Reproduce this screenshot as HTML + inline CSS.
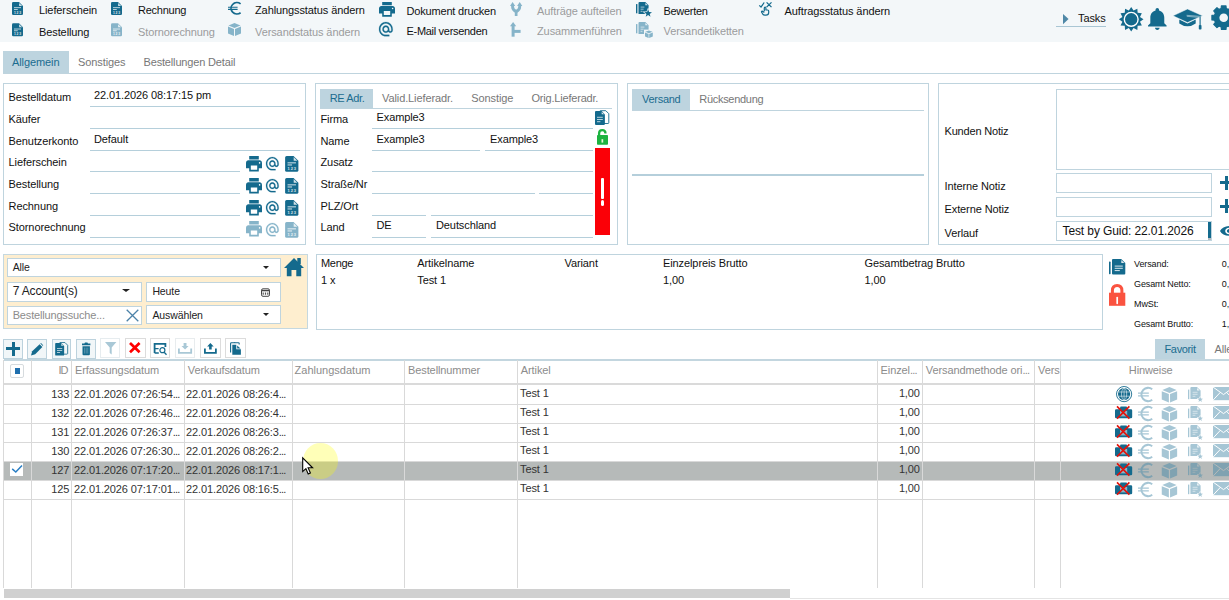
<!DOCTYPE html>
<html lang="de">
<head>
<meta charset="utf-8">
<title>Bestellungen</title>
<style>
*{box-sizing:border-box;margin:0;padding:0}
html,body{width:1229px;height:600px;overflow:hidden;background:#fff}
body{position:relative;font-family:"Liberation Sans",sans-serif;font-size:11px;color:#111;line-height:1}
.a{position:absolute}
.t{position:absolute;white-space:nowrap;line-height:14px;height:14px;letter-spacing:-0.1px}
.g{color:#9b9c9d}
.box{position:absolute;border:1px solid #bfd4de;background:#fff}
.ul{position:absolute;height:1px;background:#b5cfdb}
.tabon{position:absolute;background:#bdd4df}
.tb{color:#1b6c8f}
.tg{color:#777}
.inp{position:absolute;border:1px solid #bfd4de;background:#fff}
.vl{position:absolute;width:1px;background:#d9d9d9;top:360px;height:228px}
.hl{position:absolute;height:1px;background:#d9d9d9;left:4px;width:1225px}
.el{letter-spacing:-0.8px}
svg{position:absolute;overflow:visible}
</style>
</head>
<body>
<!-- top toolbar -->
<div class="a" id="topbar" style="left:0;top:0;width:1229px;height:42px;background:#f3f7f9"></div>

<!-- toolbar text -->
<div class="t" style="left:39px;top:3px;">Lieferschein</div>
<div class="t" style="left:39px;top:24.5px;">Bestellung</div>
<div class="t" style="left:138px;top:3px;letter-spacing:-0.25px;">Rechnung</div>
<div class="t g" style="left:138px;top:24.5px;">Stornorechnung</div>
<div class="t" style="left:255px;top:3px;">Zahlungsstatus ändern</div>
<div class="t g" style="left:255px;top:24.5px;">Versandstatus ändern</div>
<div class="t" style="left:406.5px;top:3.8px;letter-spacing:-0.18px;">Dokument drucken</div>
<div class="t" style="left:406.5px;top:23.6px;letter-spacing:-0.3px;">E-Mail versenden</div>
<div class="t g" style="left:537px;top:3.8px;">Aufträge aufteilen</div>
<div class="t g" style="left:537px;top:23.6px;">Zusammenführen</div>
<div class="t" style="left:663.5px;top:3.8px;letter-spacing:-0.3px;">Bewerten</div>
<div class="t g" style="left:663.5px;top:23.6px;">Versandetiketten</div>
<div class="t" style="left:784.5px;top:3.8px;">Auftragsstatus ändern</div>
<div class="t" style="left:1078px;top:10.5px;">Tasks</div>
<div class="ul" style="left:1056px;top:26px;width:50px;background:#a9c6d4"></div>
<!-- main tabs text -->
<div class="tabon" style="left:3px;top:51px;width:66px;height:22px"></div>
<div class="t tb" style="left:12px;top:54.7px;">Allgemein</div>
<div class="t tg" style="left:78px;top:54.7px;">Sonstiges</div>
<div class="t tg" style="left:143.5px;top:54.7px;letter-spacing:-0.16px;">Bestellungen Detail</div>
<!-- main tabs -->
<div class="ul" style="left:3px;top:73px;width:1226px;background:#bfd4de"></div>

<!-- panel 1 -->
<div class="box" id="p1" style="left:3px;top:83px;width:303px;height:162px"></div>
<div class="t" style="left:8.6px;top:89.9px;">Bestelldatum</div>
<div class="ul" style="left:90px;top:106px;width:210px;"></div>
<div class="t" style="left:8.6px;top:111.5px;">Käufer</div>
<div class="ul" style="left:90px;top:128px;width:210px;"></div>
<div class="t" style="left:8.6px;top:134.2px;">Benutzerkonto</div>
<div class="ul" style="left:90px;top:150px;width:210px;"></div>
<div class="t" style="left:8.6px;top:154.6px;">Lieferschein</div>
<div class="ul" style="left:90px;top:171px;width:150px;"></div>
<div class="t" style="left:8.6px;top:177.1px;">Bestellung</div>
<div class="ul" style="left:90px;top:193px;width:150px;"></div>
<div class="t" style="left:8.6px;top:199.0px;">Rechnung</div>
<div class="ul" style="left:90px;top:215px;width:150px;"></div>
<div class="t" style="left:8.6px;top:219.7px;">Stornorechnung</div>
<div class="ul" style="left:90px;top:237px;width:150px;"></div>
<div class="t" style="left:94px;top:88.1px;">22.01.2026 08:17:15 pm</div>
<div class="t" style="left:94px;top:131.9px;">Default</div>
<!-- panel 2 -->
<div class="box" id="p2" style="left:315px;top:83px;width:303px;height:162px"></div>
<div class="tabon" style="left:320px;top:89px;width:53px;height:19px"></div>
<div class="ul" style="left:320px;top:108px;width:292px;background:#bfd4de"></div>
<div class="t tb" style="left:329.8px;top:90.5px;letter-spacing:-0.4px;">RE Adr.</div>
<div class="t tg" style="left:382px;top:90.5px;">Valid.Lieferadr.</div>
<div class="t tg" style="left:471.3px;top:90.5px;">Sonstige</div>
<div class="t tg" style="left:531.5px;top:90.5px;letter-spacing:-0.2px;">Orig.Lieferadr.</div>
<div class="t" style="left:320.5px;top:112.3px;">Firma</div>
<div class="t" style="left:320.5px;top:134.2px;">Name</div>
<div class="t" style="left:320.5px;top:154.6px;">Zusatz</div>
<div class="t" style="left:320.5px;top:177.1px;">Straße/Nr</div>
<div class="t" style="left:320.5px;top:199.2px;">PLZ/Ort</div>
<div class="t" style="left:320.5px;top:219.7px;">Land</div>
<div class="ul" style="left:372px;top:128px;width:221px;"></div>
<div class="ul" style="left:372px;top:150px;width:108px;"></div>
<div class="ul" style="left:485px;top:150px;width:108px;"></div>
<div class="ul" style="left:372px;top:171px;width:221px;"></div>
<div class="ul" style="left:372px;top:193px;width:163px;"></div>
<div class="ul" style="left:539px;top:193px;width:54px;"></div>
<div class="ul" style="left:372px;top:215px;width:54px;"></div>
<div class="ul" style="left:431px;top:215px;width:162px;"></div>
<div class="ul" style="left:372px;top:237px;width:54px;"></div>
<div class="ul" style="left:431px;top:237px;width:162px;"></div>
<div class="t" style="left:376.5px;top:110.0px;">Example3</div>
<div class="t" style="left:376.5px;top:131.7px;">Example3</div>
<div class="t" style="left:490px;top:131.7px;">Example3</div>
<div class="t" style="left:376.5px;top:217.9px;">DE</div>
<div class="t" style="left:436px;top:217.9px;">Deutschland</div>
<div class="a" style="left:595px;top:148px;width:15px;height:87px;background:#fb0007"></div>
<!-- panel 3 -->
<div class="box" id="p3" style="left:627px;top:83px;width:302px;height:162px"></div>
<div class="tabon" style="left:632px;top:89px;width:58px;height:21px"></div>
<div class="ul" style="left:632px;top:110px;width:292px;background:#bfd4de"></div>
<div class="ul" style="left:632px;top:174px;width:292px;height:2px;background:#b5cfdb"></div>
<div class="t tb" style="left:642px;top:91.8px;letter-spacing:-0.28px;">Versand</div>
<div class="t tg" style="left:699.3px;top:91.8px;letter-spacing:-0.3px;">Rücksendung</div>
<!-- panel 4 -->
<div class="box" id="p4" style="left:938px;top:83px;width:300px;height:162px"></div>

<div class="inp" style="left:1056px;top:89px;width:180px;height:81px"></div>
<div class="inp" style="left:1056px;top:173px;width:156px;height:20px"></div>
<div class="inp" style="left:1056px;top:197px;width:156px;height:20px"></div>
<div class="inp" style="left:1056px;top:221px;width:156px;height:20px"></div>
<div class="a" style="left:1208px;top:222px;width:3px;height:16px;background:#146a8d"></div><div class="a" style="left:1208px;top:238px;width:3px;height:2px;background:#b4bcc0"></div>
<div class="t" style="left:944.5px;top:124.0px;letter-spacing:-0.18px;">Kunden Notiz</div>
<div class="t" style="left:944.5px;top:178.8px;">Interne Notiz</div>
<div class="t" style="left:944.5px;top:201.9px;">Externe Notiz</div>
<div class="t" style="left:944.5px;top:226.2px;">Verlauf</div>
<div class="t" style="left:1062.5px;top:223.7px;font-size:12px;letter-spacing:-0.1px;">Test by Guid: 22.01.2026</div>
<!-- filter panel -->
<div class="a" id="filt" style="left:3px;top:254px;width:305px;height:75px;background:#feeecf;border:1px solid #c5d8e0"></div>
<div class="inp" style="left:7px;top:258px;width:274px;height:19px"></div>
<div class="inp" style="left:7px;top:282px;width:135px;height:20px"></div>
<div class="inp" style="left:146px;top:282px;width:135px;height:20px"></div>
<div class="inp" style="left:7px;top:306px;width:135px;height:19px"></div>
<div class="inp" style="left:146px;top:305px;width:135px;height:19px"></div>
<div class="t" style="left:12.7px;top:260.2px;font-size:10.5px;color:#222;">Alle</div>
<div class="t" style="left:12.7px;top:284.4px;font-size:12px;color:#222;letter-spacing:-0.15px;">7 Account(s)</div>
<div class="t" style="left:152.4px;top:284.1px;font-size:10.5px;color:#222;">Heute</div>
<div class="t" style="left:12.7px;top:308.2px;color:#8c8c8c;letter-spacing:-0.17px;">Bestellungssuche...</div>
<div class="t" style="left:152.4px;top:307.8px;font-size:10.5px;color:#222;">Auswählen</div>
<div class="a" style="left:263.3px;top:266px;width:0;height:0;border-left:3.0px solid transparent;border-right:3.0px solid transparent;border-top:3px solid #222"></div>
<div class="a" style="left:121.5px;top:289.3px;width:0;height:0;border-left:4.0px solid transparent;border-right:4.0px solid transparent;border-top:3.5px solid #222"></div>
<div class="a" style="left:263.3px;top:313px;width:0;height:0;border-left:3.0px solid transparent;border-right:3.0px solid transparent;border-top:3px solid #222"></div>
<svg style="left:126px;top:309px" width="13" height="13" viewBox="0 0 13 13"><path d="M0.7 0.7L12.3 12.3M12.3 0.7L0.7 12.3" stroke="#4c82a8" stroke-width="1.3" fill="none"/></svg>
<!-- article list -->
<div class="box" id="art" style="left:316px;top:254px;width:787px;height:76px"></div>

<div class="t" style="left:321px;top:256px;letter-spacing:-0.3px;">Menge</div>
<div class="t" style="left:417.3px;top:256px;">Artikelname</div>
<div class="t" style="left:564.5px;top:256px;">Variant</div>
<div class="t" style="left:663px;top:256px;">Einzelpreis Brutto</div>
<div class="t" style="left:864.5px;top:256px;">Gesamtbetrag Brutto</div>
<div class="t" style="left:321px;top:272.7px;">1 x</div>
<div class="t" style="left:417.3px;top:272.7px;">Test 1</div>
<div class="t" style="left:663px;top:272.7px;">1,00</div>
<div class="t" style="left:864.5px;top:272.7px;">1,00</div>
<div class="t" style="left:1134px;top:256.6px;font-size:9px;">Versand:</div>
<div class="t" style="left:1221.8px;top:256.6px;font-size:9px;">0,</div>
<div class="t" style="left:1134px;top:276.9px;font-size:9px;">Gesamt Netto:</div>
<div class="t" style="left:1221.8px;top:276.9px;font-size:9px;">0,</div>
<div class="t" style="left:1134px;top:296.9px;font-size:9px;">MwSt:</div>
<div class="t" style="left:1221.8px;top:296.9px;font-size:9px;">0,</div>
<div class="t" style="left:1134px;top:316.9px;font-size:9px;">Gesamt Brutto:</div>
<div class="t" style="left:1221.8px;top:316.9px;font-size:9px;">1,</div>
<div class="tabon" style="left:1155px;top:339px;width:50px;height:21px"></div>
<div class="t tb" style="left:1164.5px;top:341.5px;letter-spacing:-0.35px;">Favorit</div>
<div class="t tg" style="left:1214.4px;top:341.5px;">Alle</div>
<!-- grid -->
<div class="a" id="grid" style="left:4px;top:359px;width:1225px;height:2px;background:#c3d6df"></div>
<div class="a" id="selrow" style="left:4px;top:462px;width:1225px;height:19px;background:#b6bab9"></div>

<div class="vl" style="left:3px"></div>
<div class="vl" style="left:31px"></div>
<div class="vl" style="left:71px"></div>
<div class="vl" style="left:184px"></div>
<div class="vl" style="left:292px"></div>
<div class="vl" style="left:404px"></div>
<div class="vl" style="left:517px"></div>
<div class="vl" style="left:877px"></div>
<div class="vl" style="left:922px"></div>
<div class="vl" style="left:1034px"></div>
<div class="vl" style="left:1060px"></div>
<div class="hl" style="top:383px;height:2px;background:#dadada"></div>
<div class="hl" style="top:404px"></div>
<div class="hl" style="top:423px"></div>
<div class="hl" style="top:442px"></div>
<div class="hl" style="top:461px"></div>
<div class="hl" style="top:480px"></div>
<div class="hl" style="top:499px"></div>
<div class="a" style="left:10px;top:364px;width:14px;height:14px;border:1px solid #d6dbde;border-radius:2px;background:#fff"></div>
<div class="a" style="left:15px;top:368px;width:5px;height:6px;background:#1f6fae"></div>
<div class="t" style="left:58.6px;top:362.6px;color:#8c8c8c;letter-spacing:-1.2px;">ID</div>
<div class="t" style="left:75px;top:362.6px;color:#8c8c8c;">Erfassungsdatum</div>
<div class="t" style="left:187.8px;top:362.6px;color:#8c8c8c;">Verkaufsdatum</div>
<div class="t" style="left:294.6px;top:362.6px;color:#8c8c8c;letter-spacing:0px;">Zahlungsdatum</div>
<div class="t" style="left:408px;top:362.6px;color:#8c8c8c;">Bestellnummer</div>
<div class="t" style="left:520.8px;top:362.6px;color:#8c8c8c;">Artikel</div>
<div class="t" style="left:880.6px;top:362.6px;color:#8c8c8c;">Einzel<span class="el">...</span></div>
<div class="t" style="left:925.8px;top:362.6px;color:#8c8c8c;">Versandmethode ori<span class="el">...</span></div>
<div class="t" style="left:1038px;top:362.6px;color:#8c8c8c;">Vers</div>
<div class="t" style="left:1128.8px;top:362.6px;color:#8c8c8c;">Hinweise</div>
<div class="t" style="right:1159.7px;top:387.4px;color:#333;letter-spacing:-0.12px;">133</div>
<div class="t" style="left:74px;top:387.4px;color:#333;letter-spacing:-0.12px;">22.01.2026 07:26:54<span class="el">...</span></div>
<div class="t" style="left:186.1px;top:387.4px;color:#333;letter-spacing:-0.12px;">22.01.2026 08:26:4<span class="el">...</span></div>
<div class="t" style="left:520px;top:385.9px;color:#333;letter-spacing:-0.12px;">Test 1</div>
<div class="t" style="right:309.20000000000005px;top:386.4px;color:#333;letter-spacing:-0.12px;">1,00</div>
<div class="t" style="right:1159.7px;top:406.4px;color:#333;letter-spacing:-0.12px;">132</div>
<div class="t" style="left:74px;top:406.4px;color:#333;letter-spacing:-0.12px;">22.01.2026 07:26:46<span class="el">...</span></div>
<div class="t" style="left:186.1px;top:406.4px;color:#333;letter-spacing:-0.12px;">22.01.2026 08:26:4<span class="el">...</span></div>
<div class="t" style="left:520px;top:404.9px;color:#333;letter-spacing:-0.12px;">Test 1</div>
<div class="t" style="right:309.20000000000005px;top:405.4px;color:#333;letter-spacing:-0.12px;">1,00</div>
<div class="t" style="right:1159.7px;top:425.4px;color:#333;letter-spacing:-0.12px;">131</div>
<div class="t" style="left:74px;top:425.4px;color:#333;letter-spacing:-0.12px;">22.01.2026 07:26:37<span class="el">...</span></div>
<div class="t" style="left:186.1px;top:425.4px;color:#333;letter-spacing:-0.12px;">22.01.2026 08:26:3<span class="el">...</span></div>
<div class="t" style="left:520px;top:423.9px;color:#333;letter-spacing:-0.12px;">Test 1</div>
<div class="t" style="right:309.20000000000005px;top:424.4px;color:#333;letter-spacing:-0.12px;">1,00</div>
<div class="t" style="right:1159.7px;top:444.4px;color:#333;letter-spacing:-0.12px;">130</div>
<div class="t" style="left:74px;top:444.4px;color:#333;letter-spacing:-0.12px;">22.01.2026 07:26:30<span class="el">...</span></div>
<div class="t" style="left:186.1px;top:444.4px;color:#333;letter-spacing:-0.12px;">22.01.2026 08:26:2<span class="el">...</span></div>
<div class="t" style="left:520px;top:442.9px;color:#333;letter-spacing:-0.12px;">Test 1</div>
<div class="t" style="right:309.20000000000005px;top:443.4px;color:#333;letter-spacing:-0.12px;">1,00</div>
<div class="t" style="right:1159.7px;top:463.4px;color:#333;letter-spacing:-0.12px;">127</div>
<div class="t" style="left:74px;top:463.4px;color:#333;letter-spacing:-0.12px;">22.01.2026 07:17:20<span class="el">...</span></div>
<div class="t" style="left:186.1px;top:463.4px;color:#333;letter-spacing:-0.12px;">22.01.2026 08:17:1<span class="el">...</span></div>
<div class="t" style="left:520px;top:461.9px;color:#333;letter-spacing:-0.12px;">Test 1</div>
<div class="t" style="right:309.20000000000005px;top:462.4px;color:#333;letter-spacing:-0.12px;">1,00</div>
<div class="t" style="right:1159.7px;top:482.4px;color:#333;letter-spacing:-0.12px;">125</div>
<div class="t" style="left:74px;top:482.4px;color:#333;letter-spacing:-0.12px;">22.01.2026 07:17:01<span class="el">...</span></div>
<div class="t" style="left:186.1px;top:482.4px;color:#333;letter-spacing:-0.12px;">22.01.2026 08:16:5<span class="el">...</span></div>
<div class="t" style="left:520px;top:480.9px;color:#333;letter-spacing:-0.12px;">Test 1</div>
<div class="t" style="right:309.20000000000005px;top:481.4px;color:#333;letter-spacing:-0.12px;">1,00</div>
<div class="a" style="left:10.3px;top:462.8px;width:13.2px;height:13.2px;background:#fff"></div>
<svg style="left:10px;top:463px" width="14" height="14" viewBox="0 0 14 14"><path d="M2.2 5.9L5.8 9L12 2.5" stroke="#2a7fc4" stroke-width="1.5" fill="none"/></svg>
<!-- ICONS START -->
<svg style="left:12px;top:2px" width="11" height="13" viewBox="0 0 22 26"><path d="M2.5 0H14L22 8V23.5Q22 26 19.5 26H2.5Q0 26 0 23.5V2.5Q0 0 2.5 0Z" fill="#146a8d"/><path d="M14.2 1.8V7.8H20.2Z" fill="#fff" opacity=".8"/><rect x="4" y="10.5" width="14" height="1.7" fill="#fff" opacity=".8"/><rect x="4" y="14" width="7.5" height="1.7" fill="#fff" opacity=".8"/><text x="4" y="23" font-family="Liberation Sans, sans-serif" font-weight="bold" font-size="6.6" fill="#fff" opacity=".85" textLength="14">123</text></svg>
<svg style="left:12px;top:23px" width="11" height="13.7" viewBox="0 0 22 26"><path d="M2.5 0H14L22 8V23.5Q22 26 19.5 26H2.5Q0 26 0 23.5V2.5Q0 0 2.5 0Z" fill="#146a8d"/><path d="M14.2 1.8V7.8H20.2Z" fill="#fff" opacity=".8"/><rect x="4" y="10.5" width="14" height="1.7" fill="#fff" opacity=".8"/><rect x="4" y="14" width="7.5" height="1.7" fill="#fff" opacity=".8"/><text x="4" y="23" font-family="Liberation Sans, sans-serif" font-weight="bold" font-size="6.6" fill="#fff" opacity=".85" textLength="14">123</text></svg>
<svg style="left:111px;top:2px" width="11" height="13" viewBox="0 0 22 26"><path d="M2.5 0H14L22 8V23.5Q22 26 19.5 26H2.5Q0 26 0 23.5V2.5Q0 0 2.5 0Z" fill="#146a8d"/><path d="M14.2 1.8V7.8H20.2Z" fill="#fff" opacity=".8"/><rect x="4" y="10.5" width="14" height="1.7" fill="#fff" opacity=".8"/><rect x="4" y="14" width="7.5" height="1.7" fill="#fff" opacity=".8"/><text x="4" y="23" font-family="Liberation Sans, sans-serif" font-weight="bold" font-size="6.6" fill="#fff" opacity=".85" textLength="14">123</text></svg>
<svg style="left:111px;top:23px" width="11" height="13.7" viewBox="0 0 22 26"><path d="M2.5 0H14L22 8V23.5Q22 26 19.5 26H2.5Q0 26 0 23.5V2.5Q0 0 2.5 0Z" fill="#86b4c9"/><path d="M14.2 1.8V7.8H20.2Z" fill="#fff" opacity=".8"/><rect x="4" y="10.5" width="14" height="1.7" fill="#fff" opacity=".8"/><rect x="4" y="14" width="7.5" height="1.7" fill="#fff" opacity=".8"/><text x="4" y="23" font-family="Liberation Sans, sans-serif" font-weight="bold" font-size="6.6" fill="#fff" opacity=".85" textLength="14">123</text></svg>
<svg style="left:228px;top:2.1px" width="14" height="12.6" viewBox="0 0 14 12.6" preserveAspectRatio="none"><path d="M12.6 1.9A5.9 5.6 0 1 0 12.6 10.7" stroke="#146a8d" stroke-width="1.75" fill="none"/><path d="M0 5.2H9.6M0 7.4H9.6" stroke="#146a8d" stroke-width="1.05" fill="none"/></svg>
<svg style="left:228px;top:23px" width="13" height="13" viewBox="0 0 26 26"><path d="M13 0L25 5L13 10L1 5Z" fill="#86b4c9"/><path d="M0 7L12 12V26L0 21Z" fill="#86b4c9"/><path d="M26 7L14 12V26L26 21Z" fill="#86b4c9"/></svg>
<svg style="left:379px;top:2.1px" width="16" height="14.7" viewBox="2 3 20 18" preserveAspectRatio="none"><path d="M19 8H5c-1.66 0-3 1.34-3 3v6h4v4h12v-4h4v-6c0-1.66-1.34-3-3-3zm-3 11H8v-5h8v5zm3-7c-.55 0-1-.45-1-1s.45-1 1-1 1 .45 1 1-.45 1-1 1zm-1-9H6v4h12V3z" fill="#146a8d"/></svg>
<svg style="left:379.3px;top:22.4px" width="13.7" height="14.3" viewBox="2 2 20 20" preserveAspectRatio="none"><path d="M12 2C6.48 2 2 6.48 2 12s4.48 10 10 10h5v-2h-5c-4.34 0-8-3.66-8-8s3.66-8 8-8 8 3.66 8 8v1.43c0 .79-.71 1.57-1.5 1.57s-1.5-.78-1.5-1.57V12c0-2.76-2.24-5-5-5s-5 2.24-5 5 2.24 5 5 5c1.38 0 2.64-.56 3.54-1.47.65.89 1.77 1.47 2.96 1.47 1.97 0 3.5-1.6 3.5-3.57V12c0-5.52-4.48-10-10-10zm0 13c-1.66 0-3-1.34-3-3s1.34-3 3-3 3 1.34 3 3-1.34 3-3 3z" fill="#146a8d" stroke="#146a8d" stroke-width=".3"/></svg>
<svg style="left:510.1px;top:2.1px" width="12.3" height="14" viewBox="0 0 12.3 14"><path d="M0 4L2.6 0L5.2 4ZM7.1 4L9.7 0L12.3 4Z" fill="#86b4c9"/><path d="M2.6 3.4V5Q2.6 7.8 6.15 9.6M9.7 3.4V5Q9.7 7.8 6.15 9.6" stroke="#86b4c9" stroke-width="2.9" fill="none"/><path d="M6.15 8.6V14" stroke="#86b4c9" stroke-width="2.7" fill="none"/></svg>
<svg style="left:510px;top:22px" width="10.6" height="14.7" viewBox="0 0 10.6 14.7"><path d="M0 4.2L3.1 0L6.2 4.2Z" fill="#86b4c9"/><path d="M3.1 3.5V14.7" stroke="#86b4c9" stroke-width="3" fill="none"/><rect x="3.1" y="7.9" width="7.5" height="3" fill="#86b4c9"/></svg>
<svg style="left:636px;top:2.1px" width="16" height="15" viewBox="0 0 16 15"><rect x="0" y="2.1" width="1.4" height="9.2" fill="#146a8d"/><path d="M3.5 0H9.3L12.6 3.3V11.9H2.5V1Q2.5 0 3.5 0Z" fill="#146a8d"/><path d="M9.4 0.9V3.2H11.7Z" fill="#fff" opacity=".85"/><path d="M4.6 5.1H8.4M4.6 7.2H7.6M4.6 9.3H6.4" stroke="#fff" stroke-width=".75" opacity=".8"/><polygon points="12.10,7.30 13.10,10.02 16.00,10.13 13.72,11.93 14.51,14.72 12.10,13.10 9.69,14.72 10.48,11.93 8.20,10.13 11.10,10.02" fill="#146a8d" stroke="#f3f7f9" stroke-width="1.3" paint-order="stroke"/></svg>
<svg style="left:636px;top:22.3px" width="17" height="16" viewBox="0 0 17 16"><rect x="0" y="2.1" width="1.4" height="9.2" fill="#86b4c9"/><path d="M3.5 0H9.3L12.6 3.3V11.9H2.5V1Q2.5 0 3.5 0Z" fill="#86b4c9"/><path d="M9.4 0.9V3.2H11.7Z" fill="#fff" opacity=".85"/><path d="M4.6 5.1H8.4M4.6 7.2H7.6M4.6 9.3H6.4" stroke="#fff" stroke-width=".75" opacity=".8"/><rect x="8" y="7.6" width="9.5" height="9" fill="#f3f7f9"/><g transform="translate(9,8.4) scale(0.3,0.29)"><path d="M13 0L25 5L13 10L1 5Z" fill="#86b4c9"/><path d="M0 7L12 12V26L0 21Z" fill="#86b4c9"/><path d="M26 7L14 12V26L26 21Z" fill="#86b4c9"/></g></svg>
<svg style="left:758.7px;top:2.1px" width="12.8" height="13.6" viewBox="0 0 12.8 13.6"><path d="M0.3 3.4L2 5.1L5.2 0.5M7.6 0.4L12.5 5.1M12.5 0.4L7.6 5.1" stroke="#146a8d" stroke-width="1.3" fill="none"/><path d="M5.3 9.2V5.9Q5.3 5 6.1 5Q6.9 5 6.9 5.9V8H8.6Q9.7 8 9.7 9.1V10.4Q9.7 13.1 7 13.1H6Q4.5 13.1 3.6 11.8L2.6 10.1Q2.3 9.3 3.1 9.2Q3.9 9.3 5.3 10.5" stroke="#146a8d" stroke-width="1.2" fill="none" stroke-linejoin="round"/></svg>
<svg style="left:1062.8px;top:13.8px" width="5.6" height="10.2" viewBox="0 0 5.6 10.2"><path d="M0 0L5.6 5.1L0 10.2Z" fill="#4f88a7"/></svg>
<svg style="left:1119.3px;top:6.7px" width="24.4" height="24.6" viewBox="0 0 24.4 24.6"><polygon points="12.20,0.00 14.56,3.51 18.35,1.65 18.63,5.87 22.85,6.15 20.99,9.94 24.50,12.30 20.99,14.66 22.85,18.45 18.63,18.73 18.35,22.95 14.56,21.09 12.20,24.60 9.84,21.09 6.05,22.95 5.77,18.73 1.55,18.45 3.41,14.66 -0.10,12.30 3.41,9.94 1.55,6.15 5.77,5.87 6.05,1.65 9.84,3.51" fill="#146a8d"/><circle cx="12.2" cy="12.3" r="6.9" fill="none" stroke="#fff" stroke-width="1.4"/></svg>
<svg style="left:1147.9px;top:8px" width="18.6" height="21.9" viewBox="4 2.5 16 19.5" preserveAspectRatio="none"><path d="M12 22c1.1 0 2-.9 2-2h-4c0 1.1.89 2 2 2zm6-6v-5c0-3.07-1.64-5.64-4.5-6.32V4c0-.83-.67-1.5-1.5-1.5s-1.5.67-1.5 1.5v.68C7.63 5.36 6 7.92 6 11v5l-2 2v1h16v-1l-2-2z" fill="#146a8d"/></svg>
<svg style="left:1173.4px;top:8.7px" width="29.6" height="20.6" viewBox="0 0 29.6 20.6"><path d="M6.3 10.4V14.4Q14.5 20.2 22.7 14.4V10.4L14.5 14.6Z" fill="#146a8d"/><path d="M0 6.8L14.5 0L29.5 6.8L14.5 13.6Z" fill="#146a8d" stroke="#f3f7f9" stroke-width=".5"/><path d="M13.6 6.3L27 7.4M13.8 7.3L26.4 8.4" stroke="#cfe0e8" stroke-width=".6" fill="none"/><path d="M27.1 7.6V16.2" stroke="#146a8d" stroke-width="1.1" fill="none"/><rect x="25.8" y="15.9" width="2.7" height="4.6" rx=".8" fill="#146a8d"/></svg>
<svg style="left:1211px;top:4.7px" width="25.4" height="25.4" viewBox="0 0 25.4 25.4"><polygon points="10.16,3.55 10.41,0.92 14.99,0.92 15.24,3.55 17.38,4.43 19.41,2.75 22.65,5.99 20.97,8.02 21.85,10.16 24.48,10.41 24.48,14.99 21.85,15.24 20.97,17.38 22.65,19.41 19.41,22.65 17.38,20.97 15.24,21.85 14.99,24.48 10.41,24.48 10.16,21.85 8.02,20.97 5.99,22.65 2.75,19.41 4.43,17.38 3.55,15.24 0.92,14.99 0.92,10.41 3.55,10.16 4.43,8.02 2.75,5.99 5.99,2.75 8.02,4.43" fill="#146a8d" stroke="#146a8d" stroke-width="1.2" stroke-linejoin="round"/><circle cx="12.7" cy="12.7" r="9.5" fill="#146a8d"/><circle cx="12.7" cy="12.7" r="4.3" fill="#f3f7f9"/></svg>
<svg style="left:246.1px;top:155.8px" width="16" height="15.6" viewBox="2 3 20 18" preserveAspectRatio="none"><path d="M19 8H5c-1.66 0-3 1.34-3 3v6h4v4h12v-4h4v-6c0-1.66-1.34-3-3-3zm-3 11H8v-5h8v5zm3-7c-.55 0-1-.45-1-1s.45-1 1-1 1 .45 1 1-.45 1-1 1zm-1-9H6v4h12V3z" fill="#146a8d"/></svg>
<svg style="left:266.4px;top:157.4px" width="12.7" height="13.3" viewBox="2 2 20 20" preserveAspectRatio="none"><path d="M12 2C6.48 2 2 6.48 2 12s4.48 10 10 10h5v-2h-5c-4.34 0-8-3.66-8-8s3.66-8 8-8 8 3.66 8 8v1.43c0 .79-.71 1.57-1.5 1.57s-1.5-.78-1.5-1.57V12c0-2.76-2.24-5-5-5s-5 2.24-5 5 2.24 5 5 5c1.38 0 2.64-.56 3.54-1.47.65.89 1.77 1.47 2.96 1.47 1.97 0 3.5-1.6 3.5-3.57V12c0-5.52-4.48-10-10-10zm0 13c-1.66 0-3-1.34-3-3s1.34-3 3-3 3 1.34 3 3-1.34 3-3 3z" fill="#146a8d" stroke="#146a8d" stroke-width=".3"/></svg>
<svg style="left:284.8px;top:156px" width="13.5" height="15.7" viewBox="0 0 22 26"><path d="M2.5 0H14L22 8V23.5Q22 26 19.5 26H2.5Q0 26 0 23.5V2.5Q0 0 2.5 0Z" fill="#146a8d"/><path d="M14.2 1.8V7.8H20.2Z" fill="#fff" opacity=".8"/><rect x="4" y="10.5" width="14" height="1.7" fill="#fff" opacity=".8"/><rect x="4" y="14" width="7.5" height="1.7" fill="#fff" opacity=".8"/><text x="4" y="23" font-family="Liberation Sans, sans-serif" font-weight="bold" font-size="6.6" fill="#fff" opacity=".85" textLength="14">123</text></svg>
<svg style="left:246.1px;top:177.8px" width="16" height="15.6" viewBox="2 3 20 18" preserveAspectRatio="none"><path d="M19 8H5c-1.66 0-3 1.34-3 3v6h4v4h12v-4h4v-6c0-1.66-1.34-3-3-3zm-3 11H8v-5h8v5zm3-7c-.55 0-1-.45-1-1s.45-1 1-1 1 .45 1 1-.45 1-1 1zm-1-9H6v4h12V3z" fill="#146a8d"/></svg>
<svg style="left:266.4px;top:179.4px" width="12.7" height="13.3" viewBox="2 2 20 20" preserveAspectRatio="none"><path d="M12 2C6.48 2 2 6.48 2 12s4.48 10 10 10h5v-2h-5c-4.34 0-8-3.66-8-8s3.66-8 8-8 8 3.66 8 8v1.43c0 .79-.71 1.57-1.5 1.57s-1.5-.78-1.5-1.57V12c0-2.76-2.24-5-5-5s-5 2.24-5 5 2.24 5 5 5c1.38 0 2.64-.56 3.54-1.47.65.89 1.77 1.47 2.96 1.47 1.97 0 3.5-1.6 3.5-3.57V12c0-5.52-4.48-10-10-10zm0 13c-1.66 0-3-1.34-3-3s1.34-3 3-3 3 1.34 3 3-1.34 3-3 3z" fill="#146a8d" stroke="#146a8d" stroke-width=".3"/></svg>
<svg style="left:284.8px;top:178px" width="13.5" height="15.7" viewBox="0 0 22 26"><path d="M2.5 0H14L22 8V23.5Q22 26 19.5 26H2.5Q0 26 0 23.5V2.5Q0 0 2.5 0Z" fill="#146a8d"/><path d="M14.2 1.8V7.8H20.2Z" fill="#fff" opacity=".8"/><rect x="4" y="10.5" width="14" height="1.7" fill="#fff" opacity=".8"/><rect x="4" y="14" width="7.5" height="1.7" fill="#fff" opacity=".8"/><text x="4" y="23" font-family="Liberation Sans, sans-serif" font-weight="bold" font-size="6.6" fill="#fff" opacity=".85" textLength="14">123</text></svg>
<svg style="left:246.1px;top:199.8px" width="16" height="15.6" viewBox="2 3 20 18" preserveAspectRatio="none"><path d="M19 8H5c-1.66 0-3 1.34-3 3v6h4v4h12v-4h4v-6c0-1.66-1.34-3-3-3zm-3 11H8v-5h8v5zm3-7c-.55 0-1-.45-1-1s.45-1 1-1 1 .45 1 1-.45 1-1 1zm-1-9H6v4h12V3z" fill="#146a8d"/></svg>
<svg style="left:266.4px;top:201.4px" width="12.7" height="13.3" viewBox="2 2 20 20" preserveAspectRatio="none"><path d="M12 2C6.48 2 2 6.48 2 12s4.48 10 10 10h5v-2h-5c-4.34 0-8-3.66-8-8s3.66-8 8-8 8 3.66 8 8v1.43c0 .79-.71 1.57-1.5 1.57s-1.5-.78-1.5-1.57V12c0-2.76-2.24-5-5-5s-5 2.24-5 5 2.24 5 5 5c1.38 0 2.64-.56 3.54-1.47.65.89 1.77 1.47 2.96 1.47 1.97 0 3.5-1.6 3.5-3.57V12c0-5.52-4.48-10-10-10zm0 13c-1.66 0-3-1.34-3-3s1.34-3 3-3 3 1.34 3 3-1.34 3-3 3z" fill="#146a8d" stroke="#146a8d" stroke-width=".3"/></svg>
<svg style="left:284.8px;top:200px" width="13.5" height="15.7" viewBox="0 0 22 26"><path d="M2.5 0H14L22 8V23.5Q22 26 19.5 26H2.5Q0 26 0 23.5V2.5Q0 0 2.5 0Z" fill="#146a8d"/><path d="M14.2 1.8V7.8H20.2Z" fill="#fff" opacity=".8"/><rect x="4" y="10.5" width="14" height="1.7" fill="#fff" opacity=".8"/><rect x="4" y="14" width="7.5" height="1.7" fill="#fff" opacity=".8"/><text x="4" y="23" font-family="Liberation Sans, sans-serif" font-weight="bold" font-size="6.6" fill="#fff" opacity=".85" textLength="14">123</text></svg>
<svg style="left:246.1px;top:221.3px" width="16" height="15.6" viewBox="2 3 20 18" preserveAspectRatio="none"><path d="M19 8H5c-1.66 0-3 1.34-3 3v6h4v4h12v-4h4v-6c0-1.66-1.34-3-3-3zm-3 11H8v-5h8v5zm3-7c-.55 0-1-.45-1-1s.45-1 1-1 1 .45 1 1-.45 1-1 1zm-1-9H6v4h12V3z" fill="#86b4c9"/></svg>
<svg style="left:266.4px;top:222.9px" width="12.7" height="13.3" viewBox="2 2 20 20" preserveAspectRatio="none"><path d="M12 2C6.48 2 2 6.48 2 12s4.48 10 10 10h5v-2h-5c-4.34 0-8-3.66-8-8s3.66-8 8-8 8 3.66 8 8v1.43c0 .79-.71 1.57-1.5 1.57s-1.5-.78-1.5-1.57V12c0-2.76-2.24-5-5-5s-5 2.24-5 5 2.24 5 5 5c1.38 0 2.64-.56 3.54-1.47.65.89 1.77 1.47 2.96 1.47 1.97 0 3.5-1.6 3.5-3.57V12c0-5.52-4.48-10-10-10zm0 13c-1.66 0-3-1.34-3-3s1.34-3 3-3 3 1.34 3 3-1.34 3-3 3z" fill="#86b4c9" stroke="#86b4c9" stroke-width=".3"/></svg>
<svg style="left:284.8px;top:221.5px" width="13.5" height="15.7" viewBox="0 0 22 26"><path d="M2.5 0H14L22 8V23.5Q22 26 19.5 26H2.5Q0 26 0 23.5V2.5Q0 0 2.5 0Z" fill="#86b4c9"/><path d="M14.2 1.8V7.8H20.2Z" fill="#fff" opacity=".8"/><rect x="4" y="10.5" width="14" height="1.7" fill="#fff" opacity=".8"/><rect x="4" y="14" width="7.5" height="1.7" fill="#fff" opacity=".8"/><text x="4" y="23" font-family="Liberation Sans, sans-serif" font-weight="bold" font-size="6.6" fill="#fff" opacity=".85" textLength="14">123</text></svg>
<svg style="left:595px;top:110px" width="14.3" height="15.2" viewBox="0 0 14.3 15"><path d="M5.2 0.6H10.8L13.8 3.6V12.6Q13.8 13.4 13 13.4H5.2Z" fill="#fff" stroke="#146a8d" stroke-width=".9"/><path d="M1 1H6.6L9.9 4.3V14Q9.9 15 8.9 15H1Q0 15 0 14V2Q0 1 1 1Z" fill="#146a8d"/><path d="M6.7 1.8V4.2H9.1Z" fill="#fff" opacity=".85"/><path d="M2 7.2H7.8M2 9.4H7.8M2 11.6H5.4" stroke="#fff" stroke-width=".95" opacity=".75"/></svg>
<svg style="left:596.8px;top:129.1px" width="11" height="15.8" viewBox="0 0 11 15.8"><path d="M2.1 6.2V4.3Q2.1 1.2 5.3 1.2Q8.5 1.2 8.5 4.6" stroke="#1db340" stroke-width="2.3" fill="none"/><rect x="0" y="5.9" width="11" height="9.9" rx=".8" fill="#1db340"/><rect x="4.5" y="10.2" width="1.7" height="3.4" fill="#e8f7d8"/></svg>
<div class="a" style="left:601.2px;top:177.7px;width:3px;height:21px;background:#fff;border-radius:1px"></div>
<div class="a" style="left:601px;top:200.2px;width:3.4px;height:5.8px;background:#fff;border-radius:1.7px"></div>
<div class="a" style="left:1220px;top:181.2px;width:12px;height:3px;background:#146a8d"></div>
<div class="a" style="left:1225px;top:175.7px;width:3px;height:14px;background:#146a8d"></div>
<div class="a" style="left:1220px;top:204.9px;width:12px;height:3px;background:#146a8d"></div>
<div class="a" style="left:1225px;top:199.4px;width:3px;height:14px;background:#146a8d"></div>
<svg style="left:1219.8px;top:225.5px" width="19" height="9.8" viewBox="1 4.5 22 15" preserveAspectRatio="none"><path d="M12 4.5C7 4.5 2.73 7.61 1 12c1.73 4.39 6 7.5 11 7.5s9.27-3.11 11-7.5c-1.73-4.39-6-7.5-11-7.5zM12 17c-2.76 0-5-2.24-5-5s2.24-5 5-5 5 2.24 5 5-2.24 5-5 5zm0-8c-1.66 0-3 1.34-3 3s1.340 3 3 3 3-1.34 3-3-1.34-3-3-3z" fill="#146a8d"/></svg>
<svg style="left:284.1px;top:257.7px" width="20" height="18.2" viewBox="0 0 20 18.2"><path d="M10 0L20 9.9H17.2V18.2H12.3V12H7.5V18.2H2.8V9.9H0Z" fill="#146a8d"/><rect x="13.3" y="0" width="3.5" height="6" fill="#146a8d"/></svg>
<svg style="left:261px;top:288px" width="9" height="8.8" viewBox="0 0 9 8.8"><rect x=".5" y=".8" width="8" height="7.5" rx="1.5" fill="#fff" stroke="#444" stroke-width="1"/><path d="M.5 2.6H8.5" stroke="#444" stroke-width="1.4"/><path d="M2.2 4.6V6.8M4.5 4.6V6.8M6.8 4.6V6.8" stroke="#555" stroke-width="1.2"/></svg>
<svg style="left:1108.9px;top:259.2px" width="16.3" height="15.6" viewBox="0 0 16.3 15.6"><rect x="0" y="2.6" width="1.6" height="12.6" rx=".6" fill="#146a8d"/><path d="M4 0H12.2L16.3 4.1V14.6Q16.3 15.6 15.3 15.6H4Q3 15.6 3 14.6V1Q3 0 4 0Z" fill="#146a8d"/><path d="M12.3 .9V4H15.4Z" fill="#fff" opacity=".85"/><path d="M5.7 7.1H13.8M5.7 9.3H13.8M5.7 11.6H10.8" stroke="#fff" stroke-width="1" opacity=".85"/></svg>
<svg style="left:1108.9px;top:284.1px" width="16.3" height="21.8" viewBox="0 0 16.3 21.8"><path d="M3.4 9.5V6.6Q3.4 1.5 8.15 1.5Q12.9 1.5 12.9 6.6V9.5" stroke="#fa5340" stroke-width="3" fill="none"/><rect x="0" y="8.7" width="16.3" height="13.1" fill="#fa5340"/><path d="M8.2 13.6V19.3" stroke="#fff" stroke-width="1.7" stroke-linecap="round"/></svg>
<div class="a" style="left:3px;top:339px;width:20px;height:19.5px;background:#f1f6f8;border:1px solid #bcd2dd"></div>
<div class="a" style="left:27.3px;top:339px;width:19.6px;height:19.5px;background:#f1f6f8;border:1px solid #bcd2dd"></div>
<div class="a" style="left:52px;top:339px;width:19px;height:19.5px;background:#f1f6f8;border:1px solid #bcd2dd"></div>
<div class="a" style="left:76.3px;top:339px;width:19.6px;height:19.5px;background:#f1f6f8;border:1px solid #bcd2dd"></div>
<div class="a" style="left:100.2px;top:338px;width:19.5px;height:19.5px;background:#fff;border:1px solid #e6ecef"></div>
<div class="a" style="left:125.1px;top:338px;width:20.5px;height:19.5px;background:#fff;border:1px solid #dcdcdc"></div>
<div class="a" style="left:150.1px;top:338px;width:19.6px;height:19.5px;background:#fff;border:1px solid #dcdcdc"></div>
<div class="a" style="left:175.2px;top:338px;width:19.7px;height:19.5px;background:#fff;border:1px solid #e8ecee"></div>
<div class="a" style="left:200.2px;top:338px;width:20.7px;height:19.5px;background:#fff;border:1px solid #dcdcdc"></div>
<div class="a" style="left:225.2px;top:338px;width:20.5px;height:19.5px;background:#fff;border:1px solid #dcdcdc"></div>
<div class="a" style="left:6.3px;top:347.4px;width:13.6px;height:3px;background:#146a8d"></div>
<div class="a" style="left:11.6px;top:342.2px;width:3px;height:13.4px;background:#146a8d"></div>
<svg style="left:31px;top:342.7px" width="12.2" height="12.5" viewBox="0 0 12.2 12.5"><path d="M0 12.5L1.2 8.2L8.6 1.2L11.4 4L4.2 11.3Z" fill="#146a8d"/><path d="M9.3 .5L10 0L12.2 2.2L11.9 3Z" fill="#146a8d"/></svg>
<svg style="left:54.6px;top:341.8px" width="13.3" height="13.6" viewBox="0 0 14.3 15"><path d="M5.2 0.6H10.8L13.8 3.6V12.6Q13.8 13.4 13 13.4H5.2Z" fill="#f1f6f8" stroke="#146a8d" stroke-width=".9"/><path d="M1 1H6.6L9.9 4.3V14Q9.9 15 8.9 15H1Q0 15 0 14V2Q0 1 1 1Z" fill="#146a8d"/><path d="M6.7 1.8V4.2H9.1Z" fill="#fff" opacity=".85"/><path d="M2 7.2H7.8M2 9.4H7.8M2 11.6H5.4" stroke="#fff" stroke-width=".95" opacity=".75"/></svg>
<svg style="left:81.9px;top:342px" width="8.4" height="13.2" viewBox="0 0 8.4 13.2"><path d="M0 1.6H2.4L3 .4H5.4L6 1.6H8.4V3.2H0Z" fill="#146a8d"/><path d="M.5 4.2H7.9V12.2Q7.9 13.2 6.9 13.2H1.5Q.5 13.2 .5 12.2Z" fill="#146a8d"/><path d="M2.6 5.6V11.6M4.2 5.6V11.6M5.8 5.6V11.6" stroke="#fff" stroke-width=".6" opacity=".45"/></svg>
<svg style="left:104.6px;top:342px" width="11.4" height="12.6" viewBox="0 0 11.4 12.6"><path d="M0 0H11.4L6.7 5.6V12.6L4.7 11V5.6Z" fill="#a9c8d6"/></svg>
<svg style="left:129px;top:342.3px" width="11.6" height="11.3" viewBox="0 0 11.6 11.3"><path d="M1 1L10.6 10.3M10.6 1L1 10.3" stroke="#f00" stroke-width="2.7" fill="none"/></svg>
<svg style="left:153.8px;top:342.7px" width="12.8" height="12" viewBox="0 0 12.8 12"><path d="M.6 10V.9H11.4V4" stroke="#146a8d" stroke-width="1.8" fill="none"/><path d="M.6 10H4.8M1 5.6H4.6" stroke="#146a8d" stroke-width="1.3" fill="none"/><circle cx="8.4" cy="7.2" r="2.5" stroke="#146a8d" stroke-width="1.2" fill="none"/><path d="M10.2 9.2L12.5 11.7" stroke="#146a8d" stroke-width="1.3"/></svg>
<svg style="left:178px;top:343px" width="14.1" height="10.7" viewBox="0 0 14.1 10.7"><path d="M.9 5.6V9.8H13.2V5.6" stroke="#a9c8d6" stroke-width="1.8" fill="none"/><path d="M5.6 0H8.5V3H10.6L7.05 6.6L3.5 3H5.6Z" fill="#a9c8d6"/></svg>
<svg style="left:204.1px;top:343px" width="12.8" height="10.7" viewBox="0 0 12.8 10.7"><path d="M.9 5.6V9.8H11.9V5.6" stroke="#146a8d" stroke-width="1.8" fill="none"/><path d="M6.4 0L9.7 3.5H7.7V6.6H5.1V3.5H3.1Z" fill="#146a8d"/></svg>
<svg style="left:230px;top:342.2px" width="11.2" height="12.8" viewBox="0 0 11.2 12.8"><path d="M.6 10.6V1.5Q.6 .7 1.4 .7H8.4Q9.2 .7 9.2 1.5V2.6" stroke="#146a8d" stroke-width="1.1" fill="none"/><path d="M3.6 .8L4.6 0L5.6 .8Z" fill="#146a8d"/><path d="M2.3 2.8H6.3V7.2H10.9V12.7H2.3Z" fill="#146a8d"/><path d="M7.2 3.4L10.5 6.5H7.2Z" fill="#146a8d"/></svg>
<svg style="left:1115.9px;top:385.8px" width="16.2" height="16.2" viewBox="0 0 16.2 16.2"><circle cx="8.1" cy="8.1" r="7.6" fill="#fff" stroke="#146a8d" stroke-width=".9"/><circle cx="8.1" cy="8.1" r="6.1" fill="#146a8d"/><ellipse cx="8.1" cy="8.1" rx="2.6" ry="6" fill="none" stroke="#fff" stroke-width=".7" opacity=".8"/><path d="M8.1 2.2V14M2.4 6H13.8M2.4 10.2H13.8" stroke="#fff" stroke-width=".7" opacity=".8"/></svg>
<svg style="left:1138.1px;top:387.2px" width="15.8" height="15" viewBox="0 0 14 12.6" preserveAspectRatio="none"><path d="M12.6 1.9A5.9 5.6 0 1 0 12.6 10.7" stroke="#a6c6d5" stroke-width="1.75" fill="none"/><path d="M0 5.2H9.6M0 7.4H9.6" stroke="#a6c6d5" stroke-width="1.05" fill="none"/></svg>
<svg style="left:1160.7px;top:386.8px" width="16.9" height="15.4" viewBox="0 0 26 26"><path d="M13 0L25 5L13 10L1 5Z" fill="#a6c6d5"/><path d="M0 7L12 12V26L0 21Z" fill="#a6c6d5"/><path d="M26 7L14 12V26L26 21Z" fill="#a6c6d5"/></svg>
<svg style="left:1187.9px;top:386.8px" width="15" height="15.4" viewBox="0 0 15 15.4"><rect x="0" y="2.6" width="1.3" height="9.6" fill="#a6c6d5"/><path d="M3.4 0H9L12.6 3.6V12H2.4V1Q2.4 0 3.4 0Z" fill="#a6c6d5"/><path d="M9.1 .9V3.5H11.7Z" fill="#fff" opacity=".85"/><path d="M4.6 5.3H9.6M4.6 7.3H9.6M4.6 9.3H7.4" stroke="#fff" stroke-width=".75" opacity=".7"/><polygon points="12.20,9.70 12.91,11.63 14.96,11.70 13.34,12.97 13.90,14.95 12.20,13.80 10.50,14.95 11.06,12.97 9.44,11.70 11.49,11.63" fill="#a6c6d5" stroke="#fff" stroke-width="1" paint-order="stroke"/></svg>
<svg style="left:1212.8px;top:387.2px" width="22" height="13.2" viewBox="0 0 22 13.2"><rect x="0" y="0" width="22" height="13.2" fill="#a6c6d5"/><path d="M0 0L10.5 7.6L21 0M0 13.2L7.3 5.4M21 13.2L13.6 5.4" stroke="#fff" stroke-width="1" fill="none"/></svg>
<svg style="left:1114.9px;top:406.1px" width="17.2" height="13.4" viewBox="0 0 17.2 13.4"><path d="M1.2 3.2H4.4L5.6 .6H11.6L12.8 3.2H16Q17.2 3.2 17.2 4.4V11Q17.2 12.2 16 12.2H1.2Q0 12.2 0 11V4.4Q0 3.2 1.2 3.2Z" fill="#146a8d"/><rect x="5" y="5" width="7.2" height="5.4" fill="#c9dde6" opacity=".65"/><path d="M2 .4L14.4 12.6M14.4 .4L2 12.6" stroke="#e3120b" stroke-width="1.6" fill="none"/></svg>
<svg style="left:1138.1px;top:406.2px" width="15.8" height="15" viewBox="0 0 14 12.6" preserveAspectRatio="none"><path d="M12.6 1.9A5.9 5.6 0 1 0 12.6 10.7" stroke="#a6c6d5" stroke-width="1.75" fill="none"/><path d="M0 5.2H9.6M0 7.4H9.6" stroke="#a6c6d5" stroke-width="1.05" fill="none"/></svg>
<svg style="left:1160.7px;top:405.8px" width="16.9" height="15.4" viewBox="0 0 26 26"><path d="M13 0L25 5L13 10L1 5Z" fill="#a6c6d5"/><path d="M0 7L12 12V26L0 21Z" fill="#a6c6d5"/><path d="M26 7L14 12V26L26 21Z" fill="#a6c6d5"/></svg>
<svg style="left:1187.9px;top:405.8px" width="15" height="15.4" viewBox="0 0 15 15.4"><rect x="0" y="2.6" width="1.3" height="9.6" fill="#a6c6d5"/><path d="M3.4 0H9L12.6 3.6V12H2.4V1Q2.4 0 3.4 0Z" fill="#a6c6d5"/><path d="M9.1 .9V3.5H11.7Z" fill="#fff" opacity=".85"/><path d="M4.6 5.3H9.6M4.6 7.3H9.6M4.6 9.3H7.4" stroke="#fff" stroke-width=".75" opacity=".7"/><polygon points="12.20,9.70 12.91,11.63 14.96,11.70 13.34,12.97 13.90,14.95 12.20,13.80 10.50,14.95 11.06,12.97 9.44,11.70 11.49,11.63" fill="#a6c6d5" stroke="#fff" stroke-width="1" paint-order="stroke"/></svg>
<svg style="left:1212.8px;top:406.2px" width="22" height="13.2" viewBox="0 0 22 13.2"><rect x="0" y="0" width="22" height="13.2" fill="#a6c6d5"/><path d="M0 0L10.5 7.6L21 0M0 13.2L7.3 5.4M21 13.2L13.6 5.4" stroke="#fff" stroke-width="1" fill="none"/></svg>
<svg style="left:1114.9px;top:425.1px" width="17.2" height="13.4" viewBox="0 0 17.2 13.4"><path d="M1.2 3.2H4.4L5.6 .6H11.6L12.8 3.2H16Q17.2 3.2 17.2 4.4V11Q17.2 12.2 16 12.2H1.2Q0 12.2 0 11V4.4Q0 3.2 1.2 3.2Z" fill="#146a8d"/><rect x="5" y="5" width="7.2" height="5.4" fill="#c9dde6" opacity=".65"/><path d="M2 .4L14.4 12.6M14.4 .4L2 12.6" stroke="#e3120b" stroke-width="1.6" fill="none"/></svg>
<svg style="left:1138.1px;top:425.2px" width="15.8" height="15" viewBox="0 0 14 12.6" preserveAspectRatio="none"><path d="M12.6 1.9A5.9 5.6 0 1 0 12.6 10.7" stroke="#a6c6d5" stroke-width="1.75" fill="none"/><path d="M0 5.2H9.6M0 7.4H9.6" stroke="#a6c6d5" stroke-width="1.05" fill="none"/></svg>
<svg style="left:1160.7px;top:424.8px" width="16.9" height="15.4" viewBox="0 0 26 26"><path d="M13 0L25 5L13 10L1 5Z" fill="#a6c6d5"/><path d="M0 7L12 12V26L0 21Z" fill="#a6c6d5"/><path d="M26 7L14 12V26L26 21Z" fill="#a6c6d5"/></svg>
<svg style="left:1187.9px;top:424.8px" width="15" height="15.4" viewBox="0 0 15 15.4"><rect x="0" y="2.6" width="1.3" height="9.6" fill="#a6c6d5"/><path d="M3.4 0H9L12.6 3.6V12H2.4V1Q2.4 0 3.4 0Z" fill="#a6c6d5"/><path d="M9.1 .9V3.5H11.7Z" fill="#fff" opacity=".85"/><path d="M4.6 5.3H9.6M4.6 7.3H9.6M4.6 9.3H7.4" stroke="#fff" stroke-width=".75" opacity=".7"/><polygon points="12.20,9.70 12.91,11.63 14.96,11.70 13.34,12.97 13.90,14.95 12.20,13.80 10.50,14.95 11.06,12.97 9.44,11.70 11.49,11.63" fill="#a6c6d5" stroke="#fff" stroke-width="1" paint-order="stroke"/></svg>
<svg style="left:1212.8px;top:425.2px" width="22" height="13.2" viewBox="0 0 22 13.2"><rect x="0" y="0" width="22" height="13.2" fill="#a6c6d5"/><path d="M0 0L10.5 7.6L21 0M0 13.2L7.3 5.4M21 13.2L13.6 5.4" stroke="#fff" stroke-width="1" fill="none"/></svg>
<svg style="left:1114.9px;top:444.1px" width="17.2" height="13.4" viewBox="0 0 17.2 13.4"><path d="M1.2 3.2H4.4L5.6 .6H11.6L12.8 3.2H16Q17.2 3.2 17.2 4.4V11Q17.2 12.2 16 12.2H1.2Q0 12.2 0 11V4.4Q0 3.2 1.2 3.2Z" fill="#146a8d"/><rect x="5" y="5" width="7.2" height="5.4" fill="#c9dde6" opacity=".65"/><path d="M2 .4L14.4 12.6M14.4 .4L2 12.6" stroke="#e3120b" stroke-width="1.6" fill="none"/></svg>
<svg style="left:1138.1px;top:444.2px" width="15.8" height="15" viewBox="0 0 14 12.6" preserveAspectRatio="none"><path d="M12.6 1.9A5.9 5.6 0 1 0 12.6 10.7" stroke="#a6c6d5" stroke-width="1.75" fill="none"/><path d="M0 5.2H9.6M0 7.4H9.6" stroke="#a6c6d5" stroke-width="1.05" fill="none"/></svg>
<svg style="left:1160.7px;top:443.8px" width="16.9" height="15.4" viewBox="0 0 26 26"><path d="M13 0L25 5L13 10L1 5Z" fill="#a6c6d5"/><path d="M0 7L12 12V26L0 21Z" fill="#a6c6d5"/><path d="M26 7L14 12V26L26 21Z" fill="#a6c6d5"/></svg>
<svg style="left:1187.9px;top:443.8px" width="15" height="15.4" viewBox="0 0 15 15.4"><rect x="0" y="2.6" width="1.3" height="9.6" fill="#a6c6d5"/><path d="M3.4 0H9L12.6 3.6V12H2.4V1Q2.4 0 3.4 0Z" fill="#a6c6d5"/><path d="M9.1 .9V3.5H11.7Z" fill="#fff" opacity=".85"/><path d="M4.6 5.3H9.6M4.6 7.3H9.6M4.6 9.3H7.4" stroke="#fff" stroke-width=".75" opacity=".7"/><polygon points="12.20,9.70 12.91,11.63 14.96,11.70 13.34,12.97 13.90,14.95 12.20,13.80 10.50,14.95 11.06,12.97 9.44,11.70 11.49,11.63" fill="#a6c6d5" stroke="#fff" stroke-width="1" paint-order="stroke"/></svg>
<svg style="left:1212.8px;top:444.2px" width="22" height="13.2" viewBox="0 0 22 13.2"><rect x="0" y="0" width="22" height="13.2" fill="#a6c6d5"/><path d="M0 0L10.5 7.6L21 0M0 13.2L7.3 5.4M21 13.2L13.6 5.4" stroke="#fff" stroke-width="1" fill="none"/></svg>
<svg style="left:1114.9px;top:463.1px" width="17.2" height="13.4" viewBox="0 0 17.2 13.4"><path d="M1.2 3.2H4.4L5.6 .6H11.6L12.8 3.2H16Q17.2 3.2 17.2 4.4V11Q17.2 12.2 16 12.2H1.2Q0 12.2 0 11V4.4Q0 3.2 1.2 3.2Z" fill="#146a8d"/><rect x="5" y="5" width="7.2" height="5.4" fill="#c9dde6" opacity=".65"/><path d="M2 .4L14.4 12.6M14.4 .4L2 12.6" stroke="#e3120b" stroke-width="1.6" fill="none"/></svg>
<svg style="left:1138.1px;top:463.2px" width="15.8" height="15" viewBox="0 0 14 12.6" preserveAspectRatio="none"><path d="M12.6 1.9A5.9 5.6 0 1 0 12.6 10.7" stroke="#7fa2b1" stroke-width="1.75" fill="none"/><path d="M0 5.2H9.6M0 7.4H9.6" stroke="#7fa2b1" stroke-width="1.05" fill="none"/></svg>
<svg style="left:1160.7px;top:462.8px" width="16.9" height="15.4" viewBox="0 0 26 26"><path d="M13 0L25 5L13 10L1 5Z" fill="#7fa2b1"/><path d="M0 7L12 12V26L0 21Z" fill="#7fa2b1"/><path d="M26 7L14 12V26L26 21Z" fill="#7fa2b1"/></svg>
<svg style="left:1187.9px;top:462.8px" width="15" height="15.4" viewBox="0 0 15 15.4"><rect x="0" y="2.6" width="1.3" height="9.6" fill="#7fa2b1"/><path d="M3.4 0H9L12.6 3.6V12H2.4V1Q2.4 0 3.4 0Z" fill="#7fa2b1"/><path d="M9.1 .9V3.5H11.7Z" fill="#b6bab9" opacity=".85"/><path d="M4.6 5.3H9.6M4.6 7.3H9.6M4.6 9.3H7.4" stroke="#b6bab9" stroke-width=".75" opacity=".7"/><polygon points="12.20,9.70 12.91,11.63 14.96,11.70 13.34,12.97 13.90,14.95 12.20,13.80 10.50,14.95 11.06,12.97 9.44,11.70 11.49,11.63" fill="#7fa2b1" stroke="#b6bab9" stroke-width="1" paint-order="stroke"/></svg>
<svg style="left:1212.8px;top:463.2px" width="22" height="13.2" viewBox="0 0 22 13.2"><rect x="0" y="0" width="22" height="13.2" fill="#7fa2b1"/><path d="M0 0L10.5 7.6L21 0M0 13.2L7.3 5.4M21 13.2L13.6 5.4" stroke="#b6bab9" stroke-width="1" fill="none"/></svg>
<svg style="left:1114.9px;top:482.1px" width="17.2" height="13.4" viewBox="0 0 17.2 13.4"><path d="M1.2 3.2H4.4L5.6 .6H11.6L12.8 3.2H16Q17.2 3.2 17.2 4.4V11Q17.2 12.2 16 12.2H1.2Q0 12.2 0 11V4.4Q0 3.2 1.2 3.2Z" fill="#146a8d"/><rect x="5" y="5" width="7.2" height="5.4" fill="#c9dde6" opacity=".65"/><path d="M2 .4L14.4 12.6M14.4 .4L2 12.6" stroke="#e3120b" stroke-width="1.6" fill="none"/></svg>
<svg style="left:1138.1px;top:482.2px" width="15.8" height="15" viewBox="0 0 14 12.6" preserveAspectRatio="none"><path d="M12.6 1.9A5.9 5.6 0 1 0 12.6 10.7" stroke="#a6c6d5" stroke-width="1.75" fill="none"/><path d="M0 5.2H9.6M0 7.4H9.6" stroke="#a6c6d5" stroke-width="1.05" fill="none"/></svg>
<svg style="left:1160.7px;top:481.8px" width="16.9" height="15.4" viewBox="0 0 26 26"><path d="M13 0L25 5L13 10L1 5Z" fill="#a6c6d5"/><path d="M0 7L12 12V26L0 21Z" fill="#a6c6d5"/><path d="M26 7L14 12V26L26 21Z" fill="#a6c6d5"/></svg>
<svg style="left:1187.9px;top:481.8px" width="15" height="15.4" viewBox="0 0 15 15.4"><rect x="0" y="2.6" width="1.3" height="9.6" fill="#a6c6d5"/><path d="M3.4 0H9L12.6 3.6V12H2.4V1Q2.4 0 3.4 0Z" fill="#a6c6d5"/><path d="M9.1 .9V3.5H11.7Z" fill="#fff" opacity=".85"/><path d="M4.6 5.3H9.6M4.6 7.3H9.6M4.6 9.3H7.4" stroke="#fff" stroke-width=".75" opacity=".7"/><polygon points="12.20,9.70 12.91,11.63 14.96,11.70 13.34,12.97 13.90,14.95 12.20,13.80 10.50,14.95 11.06,12.97 9.44,11.70 11.49,11.63" fill="#a6c6d5" stroke="#fff" stroke-width="1" paint-order="stroke"/></svg>
<svg style="left:1212.8px;top:482.2px" width="22" height="13.2" viewBox="0 0 22 13.2"><rect x="0" y="0" width="22" height="13.2" fill="#a6c6d5"/><path d="M0 0L10.5 7.6L21 0M0 13.2L7.3 5.4M21 13.2L13.6 5.4" stroke="#fff" stroke-width="1" fill="none"/></svg>
<div class="a" style="left:302.7px;top:443.2px;width:35.4px;height:35.8px;border-radius:50%;background:rgba(255,255,0,.28)"></div>
<svg style="left:302px;top:456.5px" width="12.5" height="18" viewBox="0 0 12.5 18"><path d="M.7 .8V14.6L3.9 11.6L6.2 17L8.4 16L6.1 10.8H10.6Z" fill="#fff" stroke="#000" stroke-width="1.1" stroke-linejoin="miter"/></svg>
<!-- ICONS END -->
<!-- scrollbar -->
<div class="a" style="left:4px;top:589px;width:786px;height:9px;background:#d0d0d0"></div>
<div class="a" style="left:790px;top:598px;width:439px;height:1px;background:#e4e4e4"></div>
</body>
</html>
